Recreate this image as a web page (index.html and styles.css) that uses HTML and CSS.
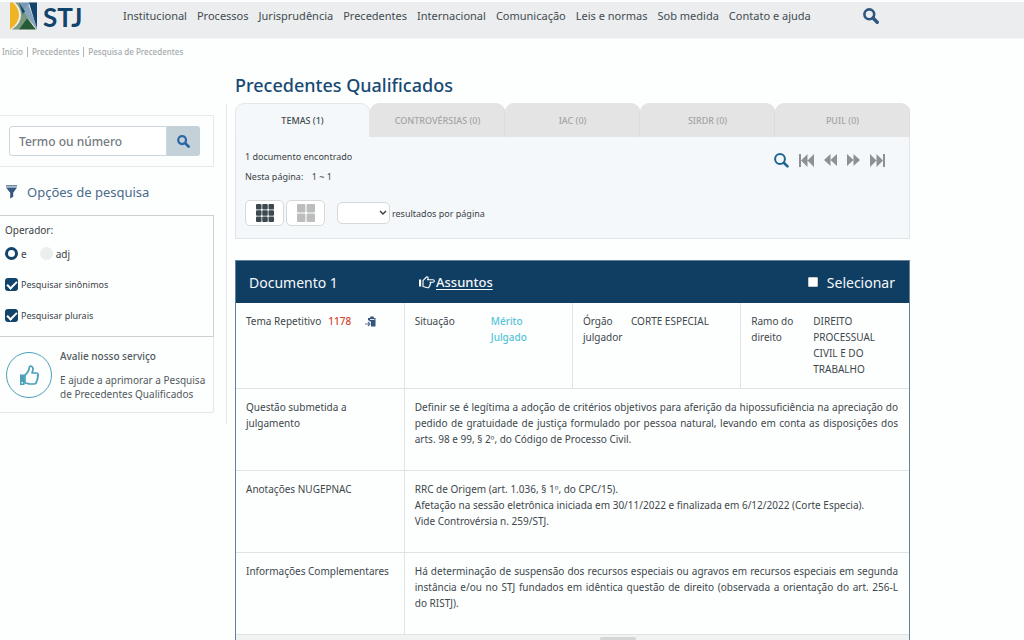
FILE: index.html
```html
<!DOCTYPE html>
<html lang="pt-BR">
<head>
<meta charset="utf-8">
<title>STJ - Precedentes Qualificados</title>
<link rel="stylesheet" href="styles.css">
</head>
<body>
<header class="topbar">
  <a class="logo" href="#" aria-label="STJ">
    <svg class="logo-mark" viewBox="0 0 27 27" aria-hidden="true">
      <path d="M0 0h3q6 6 6 13T0 27z" fill="#f0b323"/>
      <path d="M5 0h5l7 12-8 15H2q9-6 9-14T5 0z" fill="#7a987f"/>
      <path d="M10 0h10l-6 9z" fill="#7897b5"/>
      <path d="M19 0h8v27z" fill="#12436b"/>
      <path d="M18 1l9 24v2L13 9z" fill="#86a4bd"/>
      <path d="M9 0l6 9-2 3z" fill="#12436b"/>
      <path d="M14 9l8 13-13 5z" fill="#7a987f"/>
      <path d="M17 16l9 11H9z" fill="#275a36"/>
    </svg>
    <span class="logo-text">STJ</span>
  </a>
  <nav class="nav">
    <a href="#">Institucional</a>
    <a href="#">Processos</a>
    <a href="#">Jurisprudência</a>
    <a href="#">Precedentes</a>
    <a href="#">Internacional</a>
    <a href="#">Comunicação</a>
    <a href="#">Leis e normas</a>
    <a href="#">Sob medida</a>
    <a href="#">Contato e ajuda</a>
  </nav>
  <button class="icon-button" aria-label="Buscar">
    <svg width="16" height="16" viewBox="0 0 16 16"><circle cx="6.3" cy="6.3" r="4.9" fill="none" stroke="#2f5681" stroke-width="2.6"/><path d="M10 10l4.2 4.2" stroke="#2f5681" stroke-width="3.4" stroke-linecap="round"/></svg>
  </button>
</header>
<nav class="breadcrumb" aria-label="Caminho">
  <a href="#">Início</a><a href="#">Precedentes</a><a href="#">Pesquisa de Precedentes</a>
</nav>
<div class="layout">
  <aside class="sidebar">
    <form class="search">
      <input class="search-input" type="text" placeholder="Termo ou número" aria-label="Termo ou número">
      <button class="search-button" type="button" aria-label="Pesquisar">
        <svg width="13" height="13" viewBox="0 0 16 16"><circle cx="6.3" cy="6.3" r="4.8" fill="none" stroke="#2b67a5" stroke-width="2.8"/><path d="M10 10l4.2 4.2" stroke="#2b67a5" stroke-width="3.4" stroke-linecap="round"/></svg>
      </button>
    </form>
    <h2 class="options-title">
      <svg width="11" height="14" viewBox="0 0 11 14" aria-hidden="true"><path d="M0 .8h11" stroke="#7289a5" stroke-width="1.6"/><path d="M0 2.4h11L7.2 7.8v4L4.2 13.6V7.8z" fill="#345780"/></svg>
      Opções de pesquisa
    </h2>
    <fieldset class="options" aria-label="Opções de pesquisa">
      <p class="options-label">Operador:</p>
      <div class="radios">
        <label><input class="radio" type="radio" name="op" checked>e</label>
        <label><input class="radio" type="radio" name="op">adj</label>
      </div>
      <label class="check-row"><input class="check" type="checkbox" checked>Pesquisar sinônimos</label>
      <label class="check-row"><input class="check" type="checkbox" checked>Pesquisar plurais</label>
    </fieldset>
    <section class="rating">
      <span class="thumb">
        <svg width="20" height="21" viewBox="0 0 20 21" aria-hidden="true"><path d="M6 10C9 8 10 5 10.500 2c.3-1.500 3.500-1 3.500 2 0 1.500-.5 2.500-1 4h4.500c2 0 2 2.500 1 3 .8.900.5 2.300-.3 2.700.5 1-.1 2.200-.8 2.500.2 1.700-.7 2.800-2.200 2.800H11c-2 0-3-1-5-1z" fill="none" stroke="#4b9fb8" stroke-width="1.700" stroke-linejoin="round"/><path d="M1 9.500h4.500V20H1zM2.500 17v1.500H4V17z" fill="#4b9fb8" fill-rule="evenodd"/></svg>
      </span>
      <div>
        <h3 class="rating-title">Avalie nosso serviço</h3>
        <p class="rating-text">E ajude a aprimorar a Pesquisa<br>de Precedentes Qualificados</p>
      </div>
    </section>
  </aside>
  <main class="main">
    <h1 class="page-title">Precedentes Qualificados</h1>
    <div class="tabs" role="tablist">
      <button class="tab tab-active" role="tab">TEMAS (1)</button>
      <button class="tab" role="tab">CONTROVÉRSIAS (0)</button>
      <button class="tab" role="tab">IAC (0)</button>
      <button class="tab" role="tab">SIRDR (0)</button>
      <button class="tab" role="tab">PUIL (0)</button>
    </div>
    <section class="panel">
      <div class="panel-top">
        <div>
          <p class="count">1 documento encontrado</p>
          <p class="count">Nesta página: <span class="range">1 ~ 1</span></p>
        </div>
        <div class="pager">
          <button class="icon-button" aria-label="Pesquisar"><svg width="15" height="15" viewBox="0 0 15 15"><circle cx="6" cy="6" r="4.900" fill="none" stroke="#1d6591" stroke-width="2"/><path d="M9.800 9.800l3.700 3.600" stroke="#1d6591" stroke-width="2.600" stroke-linecap="round"/></svg></button>
          <button class="icon-button" aria-label="Primeira"><svg width="15" height="13" viewBox="0 0 15 13" fill="#8b9194"><path d="M0 0h2v13H0zM8.500 0v13L2 6.500zM15 0v13L8.500 6.500z"/></svg></button>
          <button class="icon-button" aria-label="Anterior"><svg width="13" height="12" viewBox="0 0 13 12" fill="#8b9194"><path d="M6.500 0v12L0 6zM13 0v12L6.500 6z"/></svg></button>
          <button class="icon-button" aria-label="Próxima"><svg width="13" height="12" viewBox="0 0 13 12" fill="#8b9194"><path d="M0 0v12l6.500-6zM6.500 0v12L13 6z"/></svg></button>
          <button class="icon-button" aria-label="Última"><svg width="15" height="13" viewBox="0 0 15 13" fill="#8b9194"><path d="M13 0h2v13h-2zM0 0v13l6.500-6.500zM6.500 0v13L13 6.500z"/></svg></button>
        </div>
      </div>
      <div class="view-row">
        <button class="view-button" aria-label="Grade pequena"><svg width="18" height="18" viewBox="0 0 18 18" fill="#3b484e"><rect width="5.500" height="5.500" rx="1"/><rect x="6.250" width="5.500" height="5.500" rx="1"/><rect x="12.500" width="5.500" height="5.500" rx="1"/><rect y="6.250" width="5.500" height="5.500" rx="1"/><rect x="6.250" y="6.250" width="5.500" height="5.500" rx="1"/><rect x="12.500" y="6.250" width="5.500" height="5.500" rx="1"/><rect y="12.500" width="5.500" height="5.500" rx="1"/><rect x="6.250" y="12.500" width="5.500" height="5.500" rx="1"/><rect x="12.500" y="12.500" width="5.500" height="5.500" rx="1"/></svg></button>
        <button class="view-button" aria-label="Grade grande"><svg width="18" height="18" viewBox="0 0 18 18" fill="#bbbdbe"><rect width="8.400" height="8.400" rx="1"/><rect x="9.600" width="8.400" height="8.400" rx="1"/><rect y="9.600" width="8.400" height="8.400" rx="1"/><rect x="9.600" y="9.600" width="8.400" height="8.400" rx="1"/></svg></button>
        <span class="select-wrap">
          <select class="page-size" id="page-size"><option></option></select>
          <svg class="chevron" width="8" height="6" viewBox="0 0 8 6" aria-hidden="true"><path d="M1 1l3 3 3-3" fill="none" stroke="#3b4346" stroke-width="1.500"/></svg>
        </span>
        <label class="page-size-label" for="page-size">resultados por página</label>
      </div>
    </section>
    <article class="document">
      <header class="doc-head">
        <h2 class="doc-title">Documento 1</h2>
        <a class="subjects" href="#"><svg width="16" height="13" viewBox="0 0 16 13" aria-hidden="true"><path d="M0 3.500h2.200v7H0z" fill="#fff"/><path d="M4 4.500C5.500 4 6.500 1 8 .9c1.500-.1 1.400 2 .4 2.900H14c1.800 0 1.800 2.400 0 2.400h-3c1 .5.900 2-.2 2.100.7.600.3 1.900-.7 1.900.2 1-.3 1.600-1.200 1.600C6.500 11.800 5.500 10.500 4 10.500z" fill="none" stroke="#fff" stroke-width="1.100" stroke-linejoin="round"/></svg><span>Assuntos</span></a>
        <label class="doc-select"><input class="doc-check" type="checkbox">Selecionar</label>
      </header>
      <table class="details">
        <tr class="row-main">
          <td><div class="pair pair-theme"><span>Tema Repetitivo</span><a class="theme" href="#">1178</a><button class="icon-button" aria-label="Copiar"><svg width="11" height="11" viewBox="0 0 11 11"><path d="M3 2h2l.5-1.500h3L9 2h1.500v8.500H6V6L3 4z" fill="#34557f"/><path d="M5 3.500h4.500" stroke="#dce5ee"/><path d="M0 8h4.500M3 6l2 2-2 2" stroke="#5d7796" fill="none" stroke-width="1.200"/></svg></button></div></td>
          <td><div class="pair"><span class="key-wide">Situação</span><span class="status">Mérito<br>Julgado</span></div></td>
          <td><div class="pair"><span class="key-short">Órgão julgador</span><span>CORTE ESPECIAL</span></div></td>
          <td><div class="pair"><span class="key">Ramo do direito</span><span>DIREITO<br>PROCESSUAL<br>CIVIL E DO<br>TRABALHO</span></div></td>
        </tr>
        <tr class="row-text">
          <th scope="row">Questão submetida a<br>julgamento</th>
          <td colspan="3"><div class="full-line">Definir se é legítima a adoção de critérios objetivos para aferição da hipossuficiência na apreciação do</div><div class="full-line">pedido de gratuidade de justiça formulado por pessoa natural, levando em conta as disposições dos</div><div>arts. 98 e 99, § 2º, do Código de Processo Civil.</div></td>
        </tr>
        <tr class="row-text">
          <th scope="row">Anotações NUGEPNAC</th>
          <td colspan="3">RRC de Origem (art. 1.036, § 1º, do CPC/15).<br>Afetação na sessão eletrônica iniciada em 30/11/2022 e finalizada em 6/12/2022 (Corte Especia).<br>Vide Controvérsia n. 259/STJ.</td>
        </tr>
        <tr class="row-text">
          <th scope="row">Informações Complementares</th>
          <td colspan="3"><div class="full-line">Há determinação de suspensão dos recursos especiais ou agravos em recursos especiais em segunda</div><div class="full-line">instância e/ou no STJ fundados em idêntica questão de direito (observada a orientação do art. 256-L</div><div>do RISTJ).</div></td>
        </tr>
      </table>
      <footer class="doc-foot"><span class="foot-handle"></span></footer>
    </article>
  </main>
</div>
</body>
</html>
```
FILE: styles.css
```css
* { box-sizing: border-box; }
body {
  margin: 0;
  height: 100vh;
  overflow: hidden;
  background: #fdfefe;
  color: #4a5356;
  font-family: "Noto Sans", "Open Sans", sans-serif;
  font-size: 10px;
  font-weight: 500;
}
h1, h2, h3, p { margin: 0; font-weight: 500; }
a { color: inherit; text-decoration: none; }
button, input, select { font: inherit; color: inherit; }
svg { display: block; flex: none; }
.icon-button { display: flex; padding: 0; border: 0; background: none; }

.topbar {
  display: flex;
  align-items: flex-start;
  height: 39px;
  border-top: 2px solid #fdfefe;
  border-bottom: 1px solid #f4f5f5;
  background: #ecedee;
  padding-left: 10px;
}
.logo { display: flex; width: 113px; gap: 6px; }
.logo-mark { width: 27px; height: 28px; }
.logo-text { color: #12436b; font-family: Lato, sans-serif; font-size: 26px; font-weight: 700; line-height: 30px; }
.nav { display: flex; gap: 10px; padding-top: 6px; line-height: 16px; font-size: 11px; font-weight: 400; white-space: nowrap; color: #3f4c51; }
.topbar .icon-button { margin-left: 52px; padding-top: 6px; }

.breadcrumb { display: flex; padding: 8px 2px 0; font-size: 8px; line-height: 10px; color: #a5aaac; }
.breadcrumb a + a { margin-left: 4px; padding-left: 4px; border-left: 1px solid #b0b4b6; }

.layout { display: flex; align-items: flex-start; padding-right: 114px; }
.sidebar { flex: none; width: 227px; height: 320px; margin-top: 47px; padding: 11px 12px 0 0; border-right: 1px solid #e6e8e9; }
.search { display: flex; padding: 10px 13px 10px 9px; border: 1px solid #e6e9ea; border-left: 0; }
.search-input { flex: 1; min-width: 0; height: 30px; padding: 0 9px; border: 1px solid #ccd6dc; border-radius: 3px 0 0 3px; background: #fff; font-size: 12px; }
.search-input::placeholder { color: #737b7f; opacity: 1; }
.search-button { display: flex; align-items: center; justify-content: center; width: 33px; padding: 0; border: 0; border-radius: 0 3px 3px 0; background: #c5d1d9; }
.options-title { display: flex; align-items: center; gap: 10px; height: 48px; padding: 2px 6px 0; font-size: 13px; font-weight: 400; color: #4b6b8c; }
.options { margin: 0; padding: 6px 5px 0; height: 122px; border: 1px solid #cdcfd0; border-left: 0; color: #3b4346; font-weight: 400; }
.options-label { line-height: 16px; font-weight: 400; }
.radios { display: flex; gap: 13px; height: 31px; }
.radios label, .check-row { display: flex; align-items: center; gap: 3px; }
.check-row { height: 31px; font-size: 9px; line-height: 12px; }
.radio { appearance: none; width: 13px; height: 13px; margin: 0; border-radius: 50%; background: #eceded; }
.radio:checked { border: 3px solid #12436b; background: #fff; }
.check { appearance: none; width: 13px; height: 13px; margin: 0; border-radius: 3px; background: #12436b; display: grid; place-items: center; }
.check::before { content: ""; width: 8px; height: 4px; border: solid #fff; border-width: 0 0 2px 2px; transform: translateY(-1px) rotate(-45deg); }
.rating { display: flex; gap: 8px; height: 76px; padding: 11px 8px 0 6px; border: 1px solid #e4e6e7; border-width: 0 1px 1px 0; border-radius: 0 0 3px 0; color: #525a5d; }
.thumb { display: flex; align-items: center; justify-content: center; flex: none; width: 46px; height: 46px; margin-top: 4px; border: 1px solid #4b9fb8; border-radius: 50%; }
.rating-title { font-size: 10px; line-height: 16px; }
.rating-text { margin-top: 9px; line-height: 14px; white-space: nowrap; font-weight: 400; }

.main { flex: 1; min-width: 0; padding: 14px 0 0 8px; }
.page-title { font-size: 18px; line-height: 28px; color: #174a73; }
.tabs { display: flex; margin-top: 4px; }
.tab { flex: 1; height: 34px; padding: 0; border: 1px solid #e4e4e4; border-right-color: #dcdcdc; border-bottom: 0; border-radius: 9px 9px 0 0; background: #e4e4e4; color: #a2a4a5; font-size: 9px; }
.tab-active { border-color: #e3e7e8; background: #f5f8fa; color: #424a4d; }
.panel { height: 102px; padding: 10px 24px 0 9px; border: 1px solid #e2e5e7; border-top: 0; background: #f5f8fa; color: #3b4346; font-size: 9px; font-weight: 400; }
.panel-top { display: flex; justify-content: space-between; }
.count { line-height: 20px; font-weight: 400; }
.range { margin-left: 6px; }
.pager { display: flex; align-items: center; gap: 10px; height: 26px; }
.view-row { display: flex; align-items: center; margin-top: 13px; }
.view-button { display: flex; align-items: center; justify-content: center; width: 39px; height: 26px; margin-right: 2px; padding: 0; border: 1px solid #d6d9da; border-radius: 5px; background: #fff; }
.select-wrap { display: grid; align-items: center; margin-left: 10px; }
.page-size { grid-area: 1 / 1; appearance: none; width: 53px; height: 22px; border: 1px solid #d6d9da; border-radius: 5px; background: #fff; }
.chevron { grid-area: 1 / 1; justify-self: end; margin-right: 3px; pointer-events: none; }
.page-size-label { margin-left: 2px; }

.document { margin-top: 21px; border: 1px solid #66819a; border-bottom: 0; }
.doc-head { display: flex; align-items: center; height: 42px; padding: 0 14px 0 13px; background: #103e62; color: #f5f8fa; font-size: 14px; font-weight: 400; }
.doc-title { width: 170px; font-size: 14px; font-weight: 400; }
.subjects { display: flex; align-items: center; gap: 1px; font-size: 13px; font-weight: 500; }
.subjects span { text-decoration: underline; text-underline-offset: 2px; }
.doc-select { display: flex; align-items: center; gap: 9px; margin-left: auto; }
.doc-check { appearance: none; width: 10px; height: 10px; margin: 0; background: #fff; border: 1px solid #c9cccd; border-radius: 1px; }
.details { width: 100%; table-layout: fixed; border-collapse: collapse; line-height: 16px; font-weight: 400; color: #3e484c; }
.details td, .details th { padding: 10px 11px 0 10px; border: 1px solid #e0e2e3; vertical-align: top; text-align: left; font-weight: 400; }
.details tr > :first-child { border-left: 0; }
.details tr > :last-child { border-right: 0; }
.details tr:first-child td { border-top: 0; }
.row-main { height: 85px; }
.row-text { height: 82px; }
.full-line { text-align: justify; text-align-last: justify; }
.pair { display: flex; }
.pair-theme { align-items: center; gap: 7px; white-space: nowrap; }
.pair-theme .icon-button { margin-left: 7px; }
.details .theme { color: #d4462f; font-weight: 500; }
.key { flex: none; width: 62px; padding-right: 16px; }
.key-short { flex: none; width: 48px; }
.key-wide { flex: none; width: 76px; }
.status { color: #56c5d8; font-weight: 500; }
.doc-foot { display: flex; justify-content: center; height: 20px; padding: 2px 0 0 90px; background: #f1f2f2; }
.foot-handle { width: 36px; height: 12px; border-radius: 2px; background: #d3d5d6; }
```
